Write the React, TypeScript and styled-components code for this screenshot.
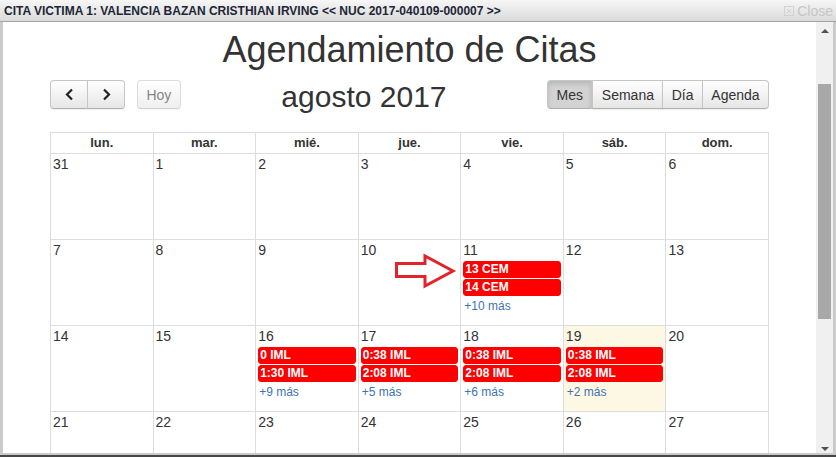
import React from 'react';
import styled, { createGlobalStyle } from 'styled-components';

const Global = createGlobalStyle`
  html, body { margin: 0; padding: 0; background: #fff; }
  body { font-family: "Liberation Sans", Arial, sans-serif; color: #333; }
  * { box-sizing: border-box; }
`;

const Dialog = styled.div`
  width: 836px;
  height: 457px;
  display: flex;
  flex-direction: column;
  background: #cbcbcb;
  border-bottom: 2px solid #464646;
  overflow: hidden;
`;

const TitleBar = styled.div`
  height: 22px;
  flex: none;
  display: flex;
  align-items: center;
  justify-content: space-between;
  padding: 0 3px 0 4px;
  background: linear-gradient(#f6f6f6, #dadada);
  border-bottom: 1px solid #a4a4a4;
`;

const TitleText = styled.span`
  font-family: "Liberation Sans Narrow", "Arial Narrow", "Liberation Sans", sans-serif;
  font-weight: bold;
  font-size: 12px;
  color: #1c2636;
  white-space: nowrap;
`;

const CloseBtn = styled.span`
  display: flex;
  align-items: center;
  gap: 3px;
  color: #c6c6c6;
  font-size: 14px;
  line-height: 16px;
`;

const Body = styled.div`
  flex: 1;
  min-height: 0;
  display: flex;
  margin: 0 3px 2px 3px;
  background: #fff;
`;

const Content = styled.div`
  flex: 1;
  min-width: 0;
  overflow: hidden;
  padding-top: 8px;
`;

const Scrollbar = styled.div`
  width: 17px;
  flex: none;
  background: #f0f0f0;
  display: flex;
  flex-direction: column;
  align-items: center;
`;

const ScrollArrow = styled.div<{ $down?: boolean }>`
  height: 17px;
  width: 17px;
  flex: none;
  display: flex;
  justify-content: center;
  align-items: ${p => (p.$down ? 'flex-end' : 'center')};
  padding-bottom: ${p => (p.$down ? '2px' : '0')};
  margin-top: ${p => (p.$down ? 'auto' : '0')};
  &::before {
    content: '';
    width: 0;
    height: 0;
    border-left: 4px solid transparent;
    border-right: 4px solid transparent;
    ${p => (p.$down ? 'border-top: 4px solid #505050;' : 'border-bottom: 4px solid #505050;')}
  }
`;

const Thumb = styled.div`
  width: 13px;
  height: 235px;
  margin-top: 45px;
  background: #a8a8a8;
`;

const Calendar = styled.div`
  width: 719px;
  margin: 0 auto;
`;

const Heading = styled.h1`
  margin: 0;
  font-size: 36px;
  line-height: 40px;
  font-weight: normal;
  text-align: center;
  color: #333;
`;

const Toolbar = styled.div`
  display: flex;
  align-items: flex-start;
  height: 29px;
  margin: 10px 0 23px;
`;

const Side = styled.div`
  display: flex;
  gap: 12px;
`;

const MonthTitle = styled.h2`
  flex: 1;
  margin: 2px 0 0;
  font-size: 30px;
  line-height: 29px;
  font-weight: normal;
  text-align: center;
  color: #333;
`;

const Group = styled.div`
  display: flex;
`;

const Btn = styled.button<{ $active?: boolean; $disabled?: boolean; $w?: number }>`
  height: 29px;
  ${p => (p.$w ? `width: ${p.$w}px;` : '')}
  padding: 0 8.4px;
  display: flex;
  align-items: center;
  justify-content: center;
  font-family: "Liberation Sans", Arial, sans-serif;
  font-size: 14px;
  color: #333;
  border: 1px solid #c6c6c6;
  border-bottom-color: #b0b0b0;
  border-radius: 4px;
  background: ${p => (p.$active ? '#d3d3d3' : 'linear-gradient(#ffffff, #e6e6e6)')};
  box-shadow: ${p =>
    p.$active ? 'inset 0 3px 5px rgba(0,0,0,.13)' : '0 1px 1px rgba(0,0,0,.06)'};
  opacity: ${p => (p.$disabled ? 0.6 : 1)};
  ${Group} > & { border-radius: 0; }
  ${Group} > & + & { margin-left: -1px; }
  ${Group} > &:first-child { border-radius: 4px 0 0 4px; }
  ${Group} > &:last-child { border-radius: 0 4px 4px 0; }
`;

const GridWrap = styled.div`
  position: relative;
`;

const Grid = styled.div`
  display: grid;
  grid-template-columns: repeat(7, 1fr);
  border-top: 1px solid #ddd;
  border-left: 1px solid #ddd;
`;

const HeadCell = styled.div`
  height: 21px;
  border-right: 1px solid #ddd;
  border-bottom: 1px solid #ddd;
  text-align: center;
  font-weight: bold;
  font-size: 13px;
  line-height: 20px;
  color: #333;
`;

const DayCell = styled.div<{ $today?: boolean }>`
  height: 86px;
  border-right: 1px solid #ddd;
  border-bottom: 1px solid #ddd;
  background: ${p => (p.$today ? '#fcf8e3' : '#fff')};
  min-width: 0;
`;

const DayNum = styled.div`
  padding: 2px 2px 0;
  font-size: 14px;
  line-height: 17px;
  color: #333;
  margin-bottom: 2px;
`;

const Event = styled.div`
  margin: 0 2px 1px;
  height: 17px;
  border: 1px solid #ff0000;
  border-radius: 3px;
  background: #ff0000;
  color: #fff;
  font-weight: bold;
  font-size: 12px;
  line-height: 15px;
  padding-left: 1px;
  white-space: nowrap;
  overflow: hidden;
`;

const More = styled.div`
  margin: 2px 3px 0;
  font-size: 12px;
  line-height: 16px;
  color: #3d73b3;
`;

const ArrowMark = styled.svg`
  position: absolute;
  left: 344px;
  top: 121px;
  overflow: visible;
`;

type Day = { n: number; events?: string[]; more?: string; today?: boolean };

const weeks: Day[][] = [
  [31, 1, 2, 3, 4, 5, 6].map(n => ({ n })),
  [
    { n: 7 }, { n: 8 }, { n: 9 }, { n: 10 },
    { n: 11, events: ['13 CEM', '14 CEM'], more: '+10 más' },
    { n: 12 }, { n: 13 },
  ],
  [
    { n: 14 }, { n: 15 },
    { n: 16, events: ['0 IML', '1:30 IML'], more: '+9 más' },
    { n: 17, events: ['0:38 IML', '2:08 IML'], more: '+5 más' },
    { n: 18, events: ['0:38 IML', '2:08 IML'], more: '+6 más' },
    { n: 19, events: ['0:38 IML', '2:08 IML'], more: '+2 más', today: true },
    { n: 20 },
  ],
  [21, 22, 23, 24, 25, 26, 27].map(n => ({ n })),
  [28, 29, 30, 31, 1, 2, 3].map(n => ({ n })),
  [4, 5, 6, 7, 8, 9, 10].map(n => ({ n })),
];

const heads = ['lun.', 'mar.', 'mié.', 'jue.', 'vie.', 'sáb.', 'dom.'];

const Chevron = ({ dir }: { dir: 'l' | 'r' }) => (
  <svg width="9" height="13" viewBox="0 0 9 13">
    <polyline
      points={dir === 'l' ? '7,1.5 2,6.5 7,11.5' : '2,1.5 7,6.5 2,11.5'}
      fill="none"
      stroke="#222"
      strokeWidth="2.2"
    />
  </svg>
);

export default function App() {
  return (
    <>
      <Global />
      <Dialog>
        <TitleBar>
          <TitleText>CITA VICTIMA 1: VALENCIA BAZAN CRISTHIAN IRVING &lt;&lt; NUC 2017-040109-000007 &gt;&gt;</TitleText>
          <CloseBtn>
            <svg width="10" height="10" viewBox="0 0 10 10">
              <rect x="0.5" y="0.5" width="9" height="9" fill="none" stroke="#d2d2d2" />
              <path d="M3 3 L7 7 M7 3 L3 7" stroke="#d2d2d2" />
            </svg>
            Close
          </CloseBtn>
        </TitleBar>
        <Body>
          <Content>
            <Calendar>
              <Heading>Agendamiento de Citas</Heading>
              <Toolbar>
                <Side>
                  <Group>
                    <Btn $w={38}><Chevron dir="l" /></Btn>
                    <Btn $w={38}><Chevron dir="r" /></Btn>
                  </Group>
                  <Btn $disabled>Hoy</Btn>
                </Side>
                <MonthTitle>agosto 2017</MonthTitle>
                <Group>
                  <Btn $active>Mes</Btn>
                  <Btn>Semana</Btn>
                  <Btn>Día</Btn>
                  <Btn>Agenda</Btn>
                </Group>
              </Toolbar>
              <GridWrap>
                <Grid>
                  {heads.map(h => (
                    <HeadCell key={h}>{h}</HeadCell>
                  ))}
                  {weeks.map((w, wi) =>
                    w.map((d, di) => (
                      <DayCell key={`${wi}-${di}`} $today={d.today}>
                        <DayNum>{d.n}</DayNum>
                        {d.events?.map(e => (
                          <Event key={e}>{e}</Event>
                        ))}
                        {d.more && <More>{d.more}</More>}
                      </DayCell>
                    ))
                  )}
                </Grid>
                <ArrowMark width="64" height="37" viewBox="0 0 64 37">
                  <polygon
                    points="2.5,10.5 31,10.5 31,3 59,18 31,33 31,23.5 2.5,23.5"
                    fill="#fff"
                    stroke="#e3232b"
                    strokeWidth="3"
                    strokeLinejoin="miter"
                  />
                </ArrowMark>
              </GridWrap>
            </Calendar>
          </Content>
          <Scrollbar>
            <ScrollArrow />
            <Thumb />
            <ScrollArrow $down />
          </Scrollbar>
        </Body>
      </Dialog>
    </>
  );
}
